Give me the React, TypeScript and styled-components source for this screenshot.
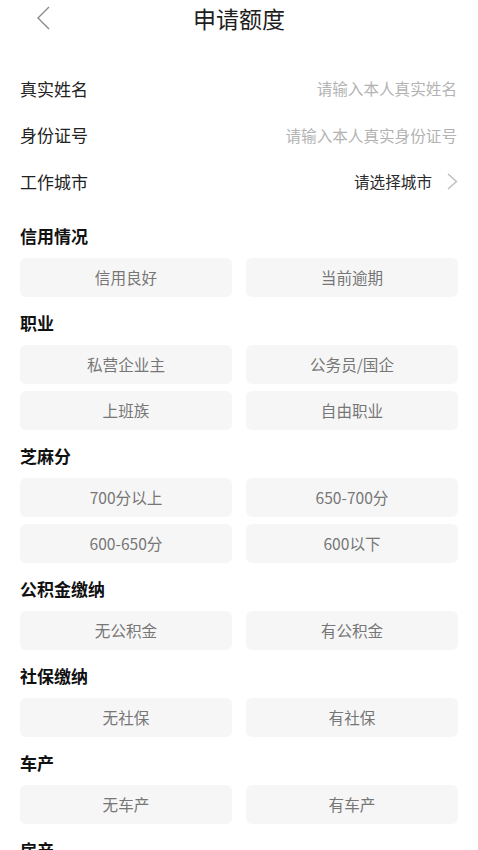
import React from 'react';
import styled, { createGlobalStyle } from 'styled-components';

const GlobalStyle = createGlobalStyle`
  body {
    margin: 0;
    background: #ffffff;
    font-family: "Noto Sans CJK SC", "Noto Sans", sans-serif;
  }
`;

const Page = styled.div`
  width: 478px;
  background: #fff;
`;

const NavBar = styled.div`
  position: relative;
  height: 37px;
  display: flex;
  align-items: center;
  justify-content: center;
`;

const BackButton = styled.button`
  position: absolute;
  left: 33px;
  top: 4px;
  width: 20px;
  height: 28px;
  padding: 0;
  border: none;
  background: none;
  display: flex;
  align-items: center;
  justify-content: center;
`;

const Title = styled.h1`
  margin: 0;
  font-size: 23px;
  font-weight: 400;
  color: #1e1e1e;
  line-height: 37px;
`;

const Form = styled.div`
  margin-top: 28px;
  padding: 0 20px;
`;

const FieldRow = styled.div`
  height: 46.5px;
  display: flex;
  align-items: center;
  justify-content: space-between;
`;

const FieldLabel = styled.span`
  font-size: 17px;
  color: #222;
`;

const Placeholder = styled.span`
  font-size: 15.6px;
  color: #b3b3b3;
  margin-right: 1px;
`;

const Picker = styled.span`
  display: flex;
  align-items: center;
  gap: 15px;
  font-size: 15.6px;
  color: #2a2a2a;
`;

const Sections = styled.div`
  margin-top: 20px;
  padding: 0 20px;
`;

const Section = styled.section`
  padding-bottom: 15px;
`;

const SectionTitle = styled.h2`
  margin: 0 0 11px;
  font-size: 17px;
  font-weight: 700;
  line-height: 22px;
  color: #111;
`;

const OptionGrid = styled.div`
  display: grid;
  grid-template-columns: 1fr 1fr;
  column-gap: 14px;
  row-gap: 7px;
`;

const Option = styled.button`
  height: 39px;
  border: none;
  border-radius: 6px;
  background: #f6f6f6;
  font-family: inherit;
  font-size: 15.6px;
  color: #767676;
  padding: 0;
`;

const sections: { title: string; options: string[] }[] = [
  { title: '信用情况', options: ['信用良好', '当前逾期'] },
  { title: '职业', options: ['私营企业主', '公务员/国企', '上班族', '自由职业'] },
  { title: '芝麻分', options: ['700分以上', '650-700分', '600-650分', '600以下'] },
  { title: '公积金缴纳', options: ['无公积金', '有公积金'] },
  { title: '社保缴纳', options: ['无社保', '有社保'] },
  { title: '车产', options: ['无车产', '有车产'] },
  { title: '房产', options: ['无房产', '有房产'] },
];

const App: React.FC = () => {
  return (
    <Page>
      <GlobalStyle />
      <NavBar>
        <BackButton aria-label="返回">
          <svg width="14" height="24" viewBox="0 0 14 24">
            <path d="M13 1 L2 12 L13 23" fill="none" stroke="#8a8a8a" strokeWidth="1.4" />
          </svg>
        </BackButton>
        <Title>申请额度</Title>
      </NavBar>

      <Form>
        <FieldRow>
          <FieldLabel>真实姓名</FieldLabel>
          <Placeholder>请输入本人真实姓名</Placeholder>
        </FieldRow>
        <FieldRow>
          <FieldLabel>身份证号</FieldLabel>
          <Placeholder>请输入本人真实身份证号</Placeholder>
        </FieldRow>
        <FieldRow>
          <FieldLabel>工作城市</FieldLabel>
          <Picker>
            请选择城市
            <svg width="11" height="17" viewBox="0 0 11 17">
              <path d="M1 1 L9.5 8.5 L1 16" fill="none" stroke="#bdbdbd" strokeWidth="1.4" />
            </svg>
          </Picker>
        </FieldRow>
      </Form>

      <Sections>
        {sections.map((s) => (
          <Section key={s.title}>
            <SectionTitle>{s.title}</SectionTitle>
            <OptionGrid>
              {s.options.map((o) => (
                <Option key={o}>{o}</Option>
              ))}
            </OptionGrid>
          </Section>
        ))}
      </Sections>
    </Page>
  );
};

export default App;
